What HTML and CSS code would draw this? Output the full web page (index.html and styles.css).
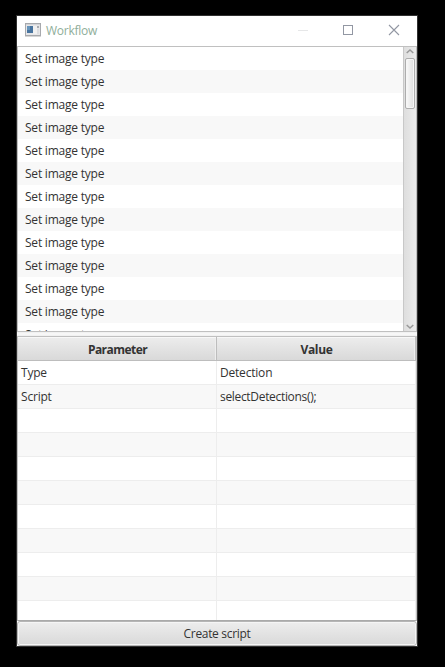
FILE: index.html
```html
<!DOCTYPE html>
<html lang="en">
<head>
<meta charset="utf-8">
<title>Workflow</title>
<link rel="stylesheet" href="styles.css">
</head>
<body>
<main class="window">
  <header class="titlebar">
    <svg class="app-icon" width="16" height="14" viewBox="0 0 16 14" shape-rendering="crispEdges">
      <rect x="0.5" y="0.5" width="15" height="12" fill="#e6e6e8" stroke="#a7a9ad"/>
      <rect x="1" y="1" width="14" height="1" fill="#d2d3d6"/>
      <rect x="2" y="3" width="6" height="7" fill="#48749f"/>
      <rect x="2" y="3" width="3" height="4" fill="#6795bc"/>
      <rect x="8" y="3" width="4" height="8" fill="#f0f0f0"/>
      <rect x="12" y="3" width="2" height="2" fill="#a9abb0"/>
      <rect x="12" y="6" width="2" height="5" fill="#dcdde0"/>
      <rect x="0" y="13" width="16" height="1" fill="#d5d5d5"/>
    </svg>
    <h1 class="title">Workflow</h1>
    <svg class="controls" width="104" height="12" viewBox="0 0 104 12">
      <path d="M0 6.500h10" stroke="#e6e7e8" fill="none"/>
      <rect x="45.500" y="1.500" width="9" height="9" stroke="#9297a3" fill="none"/>
      <path d="M91 1l10 10M101 1l-10 10" stroke="#9297a3" stroke-width="1.100" fill="none"/>
    </svg>
  </header>
  <section class="list">
    <ul class="steps">
      <li>Set image type</li><li>Set image type</li><li>Set image type</li><li>Set image type</li>
      <li>Set image type</li><li>Set image type</li><li>Set image type</li><li>Set image type</li>
      <li>Set image type</li><li>Set image type</li><li>Set image type</li><li>Set image type</li>
      <li>Set image type</li>
    </ul>
    <div class="scrollbar">
      <svg width="8" height="11" viewBox="0 0 8 11"><path d="M.7 6L4 3l3.300 3" fill="none" stroke="#999" stroke-width="1.500"/></svg>
      <div class="thumb"></div>
      <svg class="down" width="8" height="11" viewBox="0 0 8 11"><path d="M.7 5L4 8l3.300-3" fill="none" stroke="#999" stroke-width="1.500"/></svg>
    </div>
  </section>
  <div class="divider"></div>
  <section class="table">
    <div class="head"><div>Parameter</div><div>Value</div></div>
    <div class="row"><div>Type</div><div>Detection</div></div>
    <div class="row"><div>Script</div><div class="code">selectDetections();</div></div>
    <div class="row"><div></div><div></div></div>
    <div class="row"><div></div><div></div></div>
    <div class="row"><div></div><div></div></div>
    <div class="row"><div></div><div></div></div>
    <div class="row"><div></div><div></div></div>
    <div class="row"><div></div><div></div></div>
    <div class="row"><div></div><div></div></div>
    <div class="row"><div></div><div></div></div>
    <div class="row"><div></div><div></div></div>
  </section>
  <button class="create">Create script</button>
</main>
</body>
</html>
```
FILE: styles.css
```css
* { box-sizing: border-box; }
body {
  margin: 0;
  height: 667px;
  padding: 15px 0 0 16px;
  background: #000;
  overflow: hidden;
  font: 12px "Open Sans", "Noto Sans", sans-serif;
  color: #333;
}
.window {
  display: flex;
  flex-direction: column;
  width: 402px;
  height: 632px;
  border: 1px solid #303030;
  background: #fff;
}
.titlebar {
  display: flex;
  align-items: center;
  flex: none;
  height: 30px;
  padding: 0 15px 2px 8px;
}
.title {
  margin: 1px 0 0 5px;
  font-size: 12px;
  font-weight: 400;
  line-height: 16px;
  letter-spacing: -0.25px;
  color: #8fae9a;
}
.controls { margin-left: auto; }
.list {
  display: flex;
  flex: none;
  height: 286px;
  border: 1px solid #c0c0c0;
}
.steps {
  flex: 1;
  margin: 0;
  padding: 0;
  overflow: hidden;
  list-style: none;
}
.steps li {
  height: 23px;
  padding-left: 7px;
  line-height: 24px;
  letter-spacing: -0.22px;
}
.steps li:nth-child(even) { background: #f8f8f8; }
.scrollbar {
  display: flex;
  flex-direction: column;
  align-items: center;
  width: 13px;
  border-left: 1px solid #c8c8c8;
  background: linear-gradient(90deg, #dedede, #ebebeb);
}
.scrollbar svg { flex: none; }
.scrollbar .down { margin-top: auto; }
.thumb {
  width: 10px;
  height: 51px;
  border: 1px solid #adadad;
  border-radius: 2px;
  background: linear-gradient(90deg, #fafafa, #dedede);
  box-shadow: inset 0 0 0 1px #f6f6f6;
}
.divider {
  flex: none;
  height: 4px;
  background: linear-gradient(#eee, #fafafa, #eee);
}
.table {
  flex: none;
  height: 285px;
  overflow: hidden;
  border: 1px solid #c0c0c0;
  border-bottom-color: #aaa;
}
.head, .row { display: grid; grid-template-columns: 199px 199px; }
.head {
  height: 24px;
  border-bottom: 1px solid #bdbdbd;
  font-weight: 700;
  line-height: 25px;
  text-align: center;
  letter-spacing: -0.55px;
}
.head div {
  height: 23px;
  padding-left: 1px;
  border-right: 1px solid #bdbdbd;
  background: linear-gradient(#ededed, #d9d9d9);
  box-shadow: inset 0 1px #f8f8f8, inset -1px 0 #eee;
}
.head div:last-child { letter-spacing: -0.3px; }
.row {
  height: 24px;
  border-bottom: 1px solid #ededed;
  line-height: 24px;
  letter-spacing: -0.2px;
}
.row div { height: 23px; padding-left: 3px; border-right: 1px solid #ededed; }
.row .code { letter-spacing: -0.32px; }
.row:nth-child(odd) { background: #f8f8f8; }
.create {
  flex: none;
  height: 25px;
  padding: 0;
  border: 1px solid #b5b5b5;
  border-radius: 3px;
  background: linear-gradient(#ededed, #d9d9d9);
  box-shadow: inset 0 0 0 1px #f5f5f5;
  font: inherit;
  line-height: 23px;
  letter-spacing: -0.32px;
  color: #333;
}
```
